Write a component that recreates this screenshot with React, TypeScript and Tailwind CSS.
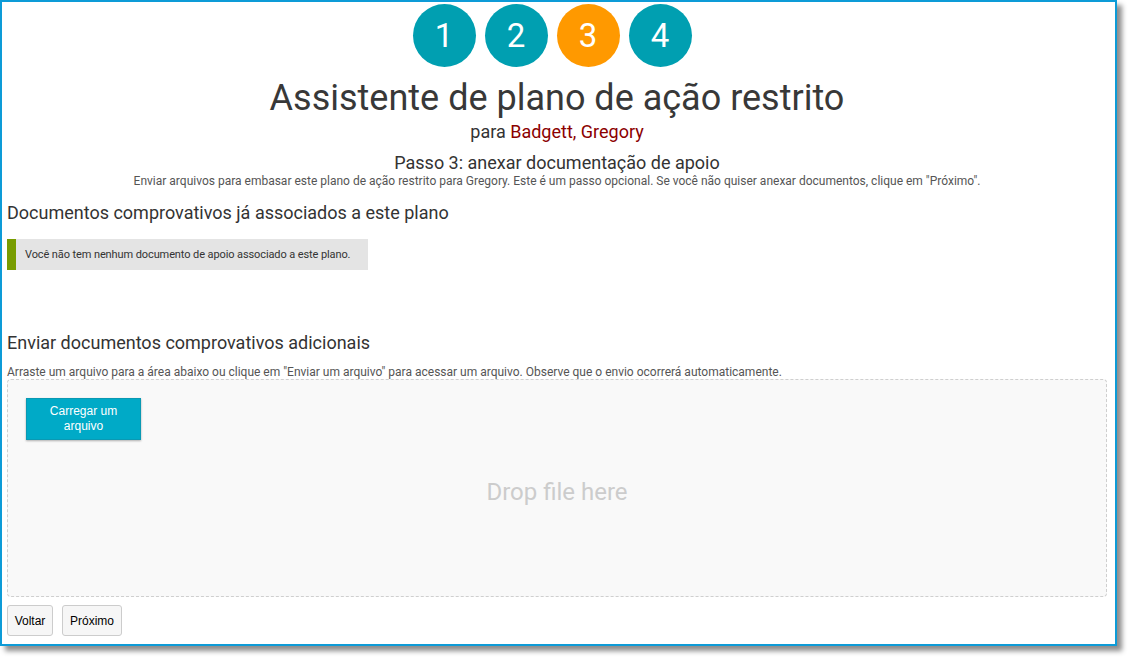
import React from "react";

const steps = [
  { n: "1", active: false },
  { n: "2", active: false },
  { n: "3", active: true },
  { n: "4", active: false },
];

export default function App() {
  return (
    <div className="w-[1131px] h-[660px] bg-white relative overflow-hidden" style={{ fontFamily: "Roboto, 'Noto Sans', sans-serif" }}>
      <div className="w-[1117px] h-[646px] border-2 border-[#0d9bd7] bg-white shadow-[5px_5px_5px_rgba(0,0,0,0.45)] pl-[5px] pr-[8px] pt-[2px] flex flex-col text-[#333]">
        <div className="flex justify-center gap-[9px] ml-[-10px]">
          {steps.map((s) => (
            <div
              key={s.n}
              className={`w-[63px] h-[63px] rounded-full flex items-center justify-center text-white text-[33px] ${s.active ? "bg-[#ff9900]" : "bg-[#009fb1]"}`}
            >
              {s.n}
            </div>
          ))}
        </div>
        <h1 className="text-center text-[36px] leading-[40px] mt-[11px] text-[#383838]">Assistente de plano de ação restrito</h1>
        <div className="text-center text-[18px] leading-[20px] mt-[4px]">
          para <span className="text-[#8b0000]">Badgett, Gregory</span>
        </div>
        <div className="text-center text-[18px] leading-[20px] mt-[11px]">Passo 3: anexar documentação de apoio</div>
        <div className="text-center text-[12px] leading-[16px] text-[#555]">
          Enviar arquivos para embasar este plano de ação restrito para Gregory. Este é um passo opcional. Se você não quiser anexar documentos, clique em "Próximo".
        </div>
        <h2 className="text-[18px] leading-[20px] mt-[14px]">Documentos comprovativos já associados a este plano</h2>
        <div className="mt-[16px] w-[361px] h-[31px] bg-[#e4e4e4] border-l-[9px] border-[#789c00] flex items-center pl-[9px] pt-[2px] text-[11px] tracking-[-0.1px] text-[#333] whitespace-nowrap">
          Você não tem nenhum documento de apoio associado a este plano.
        </div>
        <h2 className="text-[18px] leading-[20px] mt-[63px]">Enviar documentos comprovativos adicionais</h2>
        <div className="text-[12px] leading-[16px] text-[#555] mt-[11px]">
          Arraste um arquivo para a área abaixo ou clique em "Enviar um arquivo" para acessar um arquivo. Observe que o envio ocorrerá automaticamente.
        </div>
        <div className="mt-[-1px] w-[1100px] h-[218px] border border-dashed border-[#cfcfcf] rounded-[4px] bg-[#f9f9f9] relative">
          <button
            className="absolute left-[18px] top-[18px] w-[115px] h-[42px] bg-[#00aac7] border border-[#0a99b3] shadow-[0_1px_2px_rgba(0,0,0,0.3)] text-white text-[12px] leading-[15px] flex items-center justify-center text-center"
            style={{ fontFamily: "'Liberation Sans', Arial, sans-serif" }}
          >
            Carregar um
            <br />
            arquivo
          </button>
          <div className="h-full flex items-center justify-center text-[24px] text-[#cccccc] pt-[8px]">Drop file here</div>
        </div>
        <div className="flex gap-[9px] mt-[8px]" style={{ fontFamily: "'Liberation Sans', Arial, sans-serif" }}>
          <button className="h-[31px] w-[46px] bg-[#f6f6f6] border border-[#cccccc] rounded-[3px] text-[12px] text-black">Voltar</button>
          <button className="h-[31px] w-[60px] bg-[#f6f6f6] border border-[#cccccc] rounded-[3px] text-[12px] text-black">Próximo</button>
        </div>
      </div>
    </div>
  );
}
